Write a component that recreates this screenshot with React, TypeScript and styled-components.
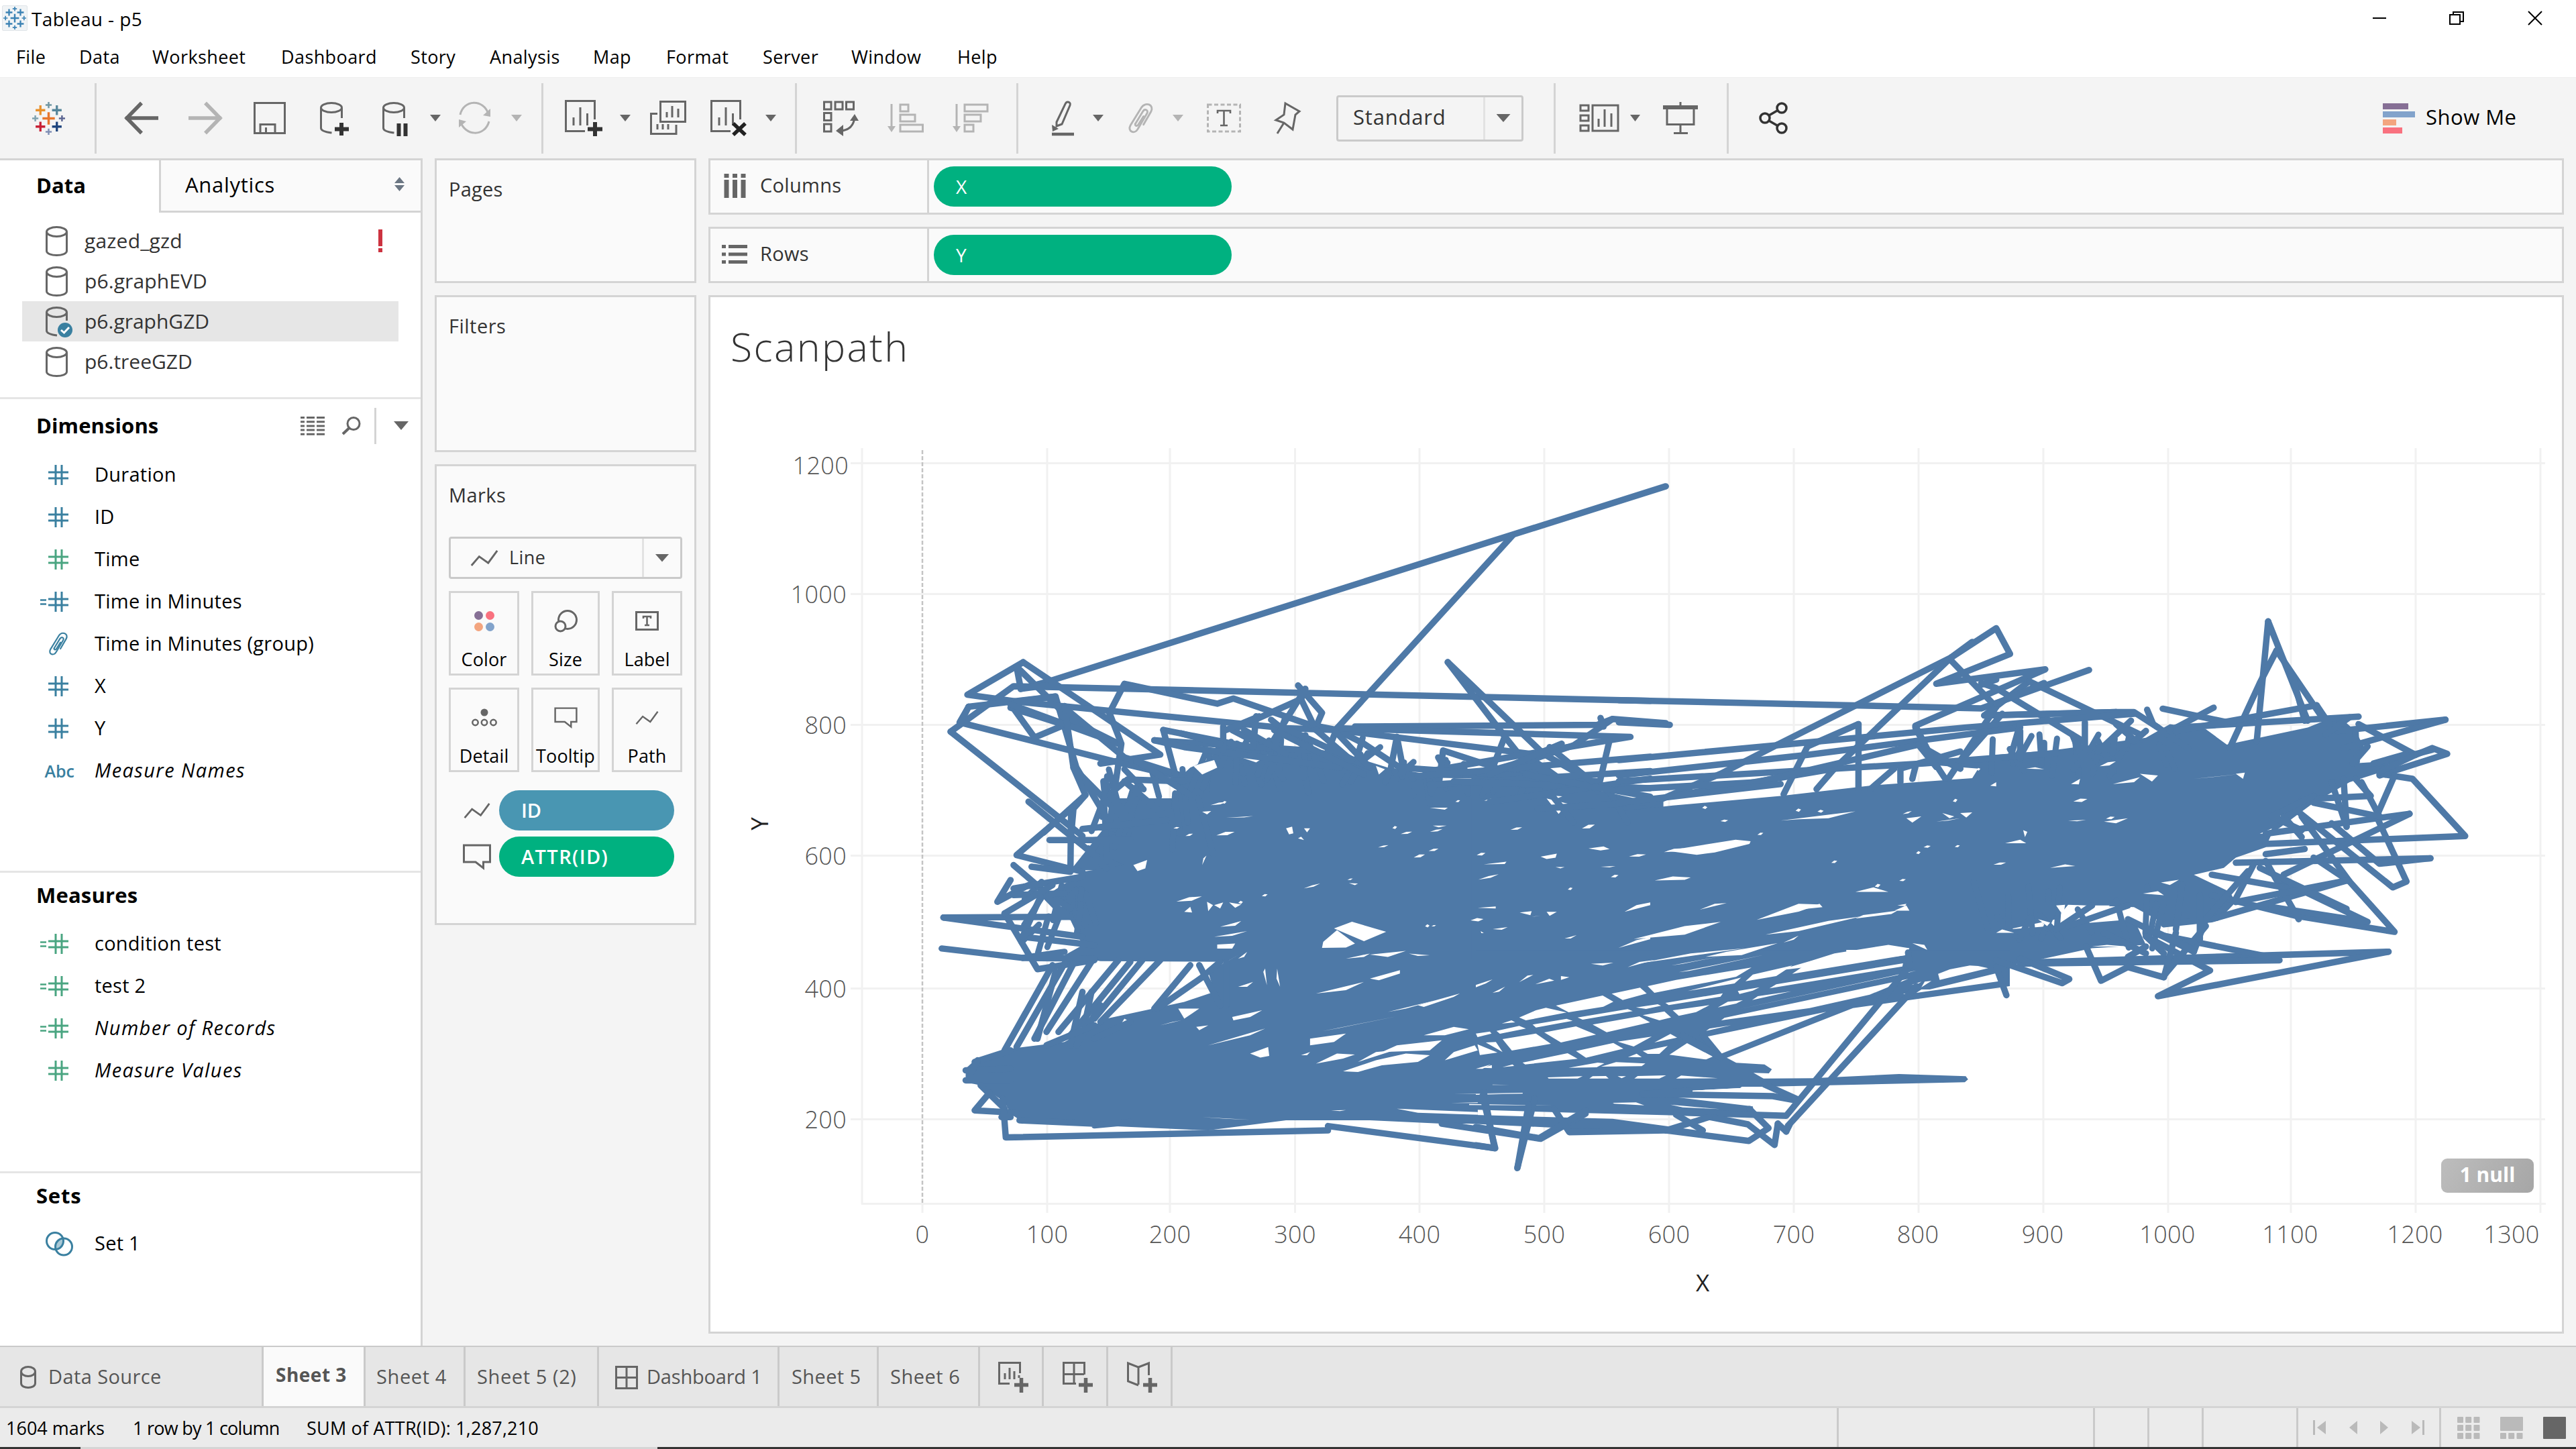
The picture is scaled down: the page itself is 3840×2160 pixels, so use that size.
import React from 'react';
import styled, { createGlobalStyle } from 'styled-components';

const Global = createGlobalStyle`
  * { box-sizing: border-box; }
  html, body { margin: 0; padding: 0; }
  body {
    width: 3840px; height: 2160px; overflow: hidden; background: #f4f4f4; color: #000;
    font-family: "Open Sans", "Noto Sans", "Liberation Sans", sans-serif;
    font-size: 29px; line-height: 1;
  }
  svg { display: block; flex: none; overflow: visible; }
`;

/* ---------- shared ---------- */
const INK = '#666666';
const MUTED = '#b4b4b4';
const BLUE = '#3a80a0';
const GREEN = '#4aa581';
const MARK = '#4e79a7';

const Frame = styled.div`width: 3840px; height: 2160px; display: flex; flex-direction: column;`;
const Text = styled.span<{ $size?: number; $weight?: number; $color?: string; $ls?: number; $italic?: boolean }>`
  display: inline-block;
  padding-bottom: 3px;
  white-space: nowrap;
  font-size: ${p => p.$size ?? 29}px;
  font-weight: ${p => p.$weight ?? 400};
  color: ${p => p.$color ?? '#000'};
  letter-spacing: ${p => p.$ls ?? 0}px;
  font-style: ${p => (p.$italic ? 'italic' : 'normal')};
`;
const Caret = styled.i<{ $color?: string; $w?: number; $h?: number }>`
  display: block; width: ${p => p.$w ?? 16}px; height: ${p => p.$h ?? 10}px;
  background: ${p => p.$color ?? INK};
  clip-path: polygon(0 0, 100% 0, 50% 100%);
`;

/* ---------- title and menu ---------- */
const TitleBar = styled.header`height: 58px; background: #fff; display: flex; align-items: center; padding: 0 50px 4px 3px;`;
const TitleName = styled.div`flex: 1; padding: 4px 0 0 6px;`;
const WindowButtons = styled.div`display: flex; gap: 96px; align-items: center; padding-right: 1px;`;
const MenuBar = styled.nav`height: 57px; background: #fff; display: flex; align-items: center; padding-left: 24px;`;
const MenuItem = styled.div<{ $w: number }>`width: ${p => p.$w}px; padding-bottom: 3px;`;

const menus: [string, number][] = [['File', 94], ['Data', 109], ['Worksheet', 192], ['Dashboard', 193], ['Story', 118], ['Analysis', 154], ['Map', 109], ['Format', 144], ['Server', 132], ['Window', 158], ['Help', 80]];

/* ---------- toolbar ---------- */
const Toolbar = styled.div`height: 121px; background: #f4f4f4; border-top: 1px solid #efefef; display: flex; align-items: center;`;
const Tool = styled.div<{ $gap: number; $w: number }>`
  margin-left: ${p => p.$gap}px; width: ${p => p.$w}px; flex: none; display: flex; align-items: center;
`;
const Rule = styled.div<{ $gap: number }>`margin-left: ${p => p.$gap}px; width: 3px; height: 105px; background: #d4d4d4; flex: none;`;
const Select = styled.div<{ $w: number; $h: number; $arrow: number; $top?: number }>`
  width: ${p => p.$w}px; height: ${p => p.$h}px; margin-top: ${p => p.$top ?? 0}px;
  border: 3px solid #cacaca; border-radius: 4px; display: flex; align-items: stretch;
  & > :first-child { flex: 1; display: flex; align-items: center; }
  & > :last-child { width: ${p => p.$arrow}px; border-left: 3px solid #e2e2e2; display: flex; align-items: center; justify-content: center; }
`;
const SelectValue = styled.div<{ $pad: number; $gap?: number }>`padding-left: ${p => p.$pad}px; gap: ${p => p.$gap ?? 0}px;`;

const Plus = ({ x, y, r, w, c }: { x: number; y: number; r: number; w: number; c: string }) => (
  <path d={`M${x - r} ${y}H${x + r}M${x} ${y - r}V${y + r}`} stroke={c} strokeWidth={w} />
);
const Logo = ({ size, mono }: { size: number; mono?: boolean }) => {
  const c = mono ? Array(9).fill('#3b82b4') : ['#e8762c', '#e8912d', '#56869b', '#c72035', '#1f457e', '#6f96a3', '#7f8fb5', '#7fa2b0', '#5c6692'];
  return (
    <svg width={size} height={size} viewBox="0 0 48 48" fill="none">
      <Plus x={24} y={24} r={9} w={3.4} c={c[0]} />
      <Plus x={12} y={12} r={7} w={3.2} c={c[1]} />
      <Plus x={36} y={12} r={7} w={3.2} c={c[2]} />
      <Plus x={12} y={36} r={7} w={3.2} c={c[3]} />
      <Plus x={36} y={36} r={7} w={3.2} c={c[4]} />
      <Plus x={24} y={4.5} r={4.5} w={2.4} c={c[5]} />
      <Plus x={24} y={43.5} r={4.5} w={2.4} c={c[6]} />
      <Plus x={4.5} y={24} r={4.5} w={2.4} c={c[7]} />
      <Plus x={43.5} y={24} r={4.5} w={2.4} c={c[8]} />
    </svg>
  );
};

const Ic = ({ w, h, c = INK, sw = 3, children }: { w: number; h: number; c?: string; sw?: number; children: React.ReactNode }) => (
  <svg width={w} height={h} viewBox={`0 0 ${w} ${h}`} fill="none" stroke={c} strokeWidth={sw}>{children}</svg>
);
const Arrow = ({ flip, c }: { flip?: boolean; c: string }) => (
  <Ic w={51} h={48} c={c} sw={5.5}><g transform={flip ? 'translate(51 0) scale(-1 1)' : undefined}><path d="M2 24H51M26 1.5L4 24L26 46.5" /></g></Ic>
);
const Cylinder = ({ w, h, children, cut }: { w: number; h: number; children?: React.ReactNode; cut?: boolean }) => (
  <Ic w={w} h={h}>
    <ellipse cx={w / 2} cy={8.5} rx={w / 2 - 1.5} ry={7} />
    <path d={cut ? `M1.5 8.5V${h - 9}q0 5 ${w / 2 - 1} 7M${w - 1.5} 8.5V${h - 24}` : `M1.5 8.5V${h - 8}C1.5 ${h + 0.6} ${w - 1.5} ${h + 0.6} ${w - 1.5} ${h - 8}V8.5`} />
    {children}
  </Ic>
);
const Paperclip = ({ w, h, c }: { w: number; h: number; c: string }) => (
  <svg width={w} height={h} viewBox="0 0 36 46" fill="none" stroke={c} strokeWidth={2.8} strokeLinecap="round">
    <path d="M10 31L21 13C24 8 30 11 27 16L14 38C9 47 -2 42 3 33L19 7C25 -2 38 3 33 13L22 32" />
    <path d="M10 31C9 34 13 35 14.5 32L22 20" />
  </svg>
);
const LineMark = ({ w, h, sw = 3 }: { w: number; h: number; sw?: number }) => (
  <svg width={w} height={h} viewBox="0 0 42 25" fill="none" stroke={INK} strokeWidth={sw}><path d="M1 24L13 10L27 20L41 1" /></svg>
);
const Bubble = ({ w, h }: { w: number; h: number }) => (
  <svg width={w} height={h} viewBox="0 0 42 38" fill="none" stroke={INK} strokeWidth={3}><path d="M1.5 2H40.5V27H30.5V36L19 27H1.5Z" /></svg>
);

const ToolStrip = () => (
  <Toolbar>
    <Tool $gap={48} $w={49}><Logo size={49} /></Tool>
    <Rule $gap={44} />
    <Tool $gap={41} $w={51}><Arrow c={INK} /></Tool>
    <Tool $gap={45} $w={51}><Arrow flip c={MUTED} /></Tool>
    <Tool $gap={46} $w={49}><Ic w={48} h={48}><path d="M1.5 1.5H46.5V46.5H1.5ZM10 46V33.5H32V46M18.5 38V46" /></Ic></Tool>
    <Tool $gap={50} $w={42}>
      <Cylinder w={34} h={48} cut><path d="M32 31V50M22 40.500H43" stroke="#333" strokeWidth={6} /></Cylinder>
    </Tool>
    <Tool $gap={51} $w={37}>
      <Cylinder w={34} h={48} cut><path d="M24.500 32V51M34.500 32V51" stroke="#333" strokeWidth={6} /></Cylinder>
    </Tool>
    <Tool $gap={34} $w={16}><Caret /></Tool>
    <Tool $gap={26} $w={49}>
      <Ic w={49} h={48} c={MUTED}><path d="M3 19C8 -4 38 -5 45 18M46 29C40 52 10 52 3 28" /><path d="M37 20L48 22L48 10ZM12 29L1 26L1 38Z" fill={MUTED} stroke="none" /></Ic>
    </Tool>
    <Tool $gap={30} $w={16}><Caret $color={MUTED} /></Tool>
    <Rule $gap={29} />
    <Tool $gap={32} $w={55}>
      <Ic w={55} h={54}><path d="M30 46.500H1.500V1.500H44.500V29M13 38V26M23 38V11M33.500 38V20" /><path d="M45 33V54M34 43.500H56" stroke="#333" strokeWidth={6} /></Ic>
    </Tool>
    <Tool $gap={27} $w={16}><Caret /></Tool>
    <Tool $gap={29} $w={55}>
      <Ic w={55} h={54}><path d="M15.500 2.500H52.500V32.500H15.500ZM25 26V18M33 26V9M42 26V13M11 20.500H1.500V50.500H39V37M11 44V36M19 44V36M27 44V36" /></Ic>
    </Tool>
    <Tool $gap={35} $w={55}>
      <Ic w={55} h={54}><path d="M30 46.500H1.500V1.500H44.500V29M13 38V26M23 38V11M33.500 38V20" /><path d="M34 35L52 52M52 35L34 52" stroke="#222" strokeWidth={5.500} /></Ic>
    </Tool>
    <Tool $gap={27} $w={16}><Caret /></Tool>
    <Rule $gap={28} />
    <Tool $gap={39} $w={53}>
      <Ic w={53} h={52}><path d="M1.500 2H12V13H1.500ZM18 2H29V13H18ZM34.500 2H45.500V13H34.500ZM1.500 18.500H12V29.500H1.500ZM1.500 35H12V46H1.500Z" /><path d="M47 24C46 38 38 44 26 45" /><path d="M40 30L47 20L53 30ZM30 36L19 45L30 53Z" fill={INK} stroke="none" /></Ic>
    </Tool>
    <Tool $gap={43} $w={54}>
      <Ic w={54} h={44} c={MUTED}><path d="M6 1V36M19 2H31V12H19ZM19 17H41V27H19ZM19 32H52.500V42H19Z" /><path d="M0 34H12L6 43Z" fill={MUTED} stroke="none" /></Ic>
    </Tool>
    <Tool $gap={43} $w={53}>
      <Ic w={54} h={44} c={MUTED}><path d="M6 1V36M18 2H52V12H18ZM18 17H42V27H18ZM18 32H31V42H18Z" /><path d="M0 34H12L6 43Z" fill={MUTED} stroke="none" /></Ic>
    </Tool>
    <Rule $gap={42} />
    <Tool $gap={50} $w={34}>
      <Ic w={34} h={52}><path d="M7 32L20 5C22 0 29 2 27 7L15 35L7 38Z" /><path d="M0 36L10 42L1 46Z" fill={INK} stroke="none" /><path d="M0 50H33" strokeWidth={4.500} /></Ic>
    </Tool>
    <Tool $gap={27} $w={16}><Caret /></Tool>
    <Tool $gap={37} $w={36}><Paperclip w={37} h={47} c={MUTED} /></Tool>
    <Tool $gap={30} $w={16}><Caret $color={MUTED} /></Tool>
    <Tool $gap={35} $w={51}>
      <Ic w={51} h={44}><path d="M1.500 2H49.500V42H1.500Z" stroke={MUTED} strokeDasharray="6 3.500" /><path d="M16 15V11H35V15M25.500 11V33M20 33H31" strokeWidth={2.600} /></Ic>
    </Tool>
    <Tool $gap={50} $w={38}>
      <Ic w={38} h={48}><path d="M16 2L37 14L31 19L27 41L14 31L2 27L14 19ZM14 31L4 47" /></Ic>
    </Tool>
    <Tool $gap={54} $w={279}>
      <Select $w={279} $h={69} $arrow={57}>
        <SelectValue $pad={22}><Text $size={31} $color="#333" $ls={0.8}>Standard</Text></SelectValue>
        <div><Caret $w={21} $h={12} /></div>
      </Select>
    </Tool>
    <Rule $gap={45} />
    <Tool $gap={35} $w={61}>
      <Ic w={61} h={42}><path d="M2 2H14V10H2ZM2 17H14V25H2ZM2 32H14V40H2ZM20 2H58V40H20ZM29 34V22M38 34V8M48 34V14" /></Ic>
    </Tool>
    <Tool $gap={15} $w={15}><Caret $w={15} /></Tool>
    <Tool $gap={34} $w={52}>
      <Ic w={52} h={48}><path d="M26 0V6M6 11V33.500H46V11M26 34V45" /><path d="M0 8H52" strokeWidth={6} /><path d="M16 46.500H37" /></Ic>
    </Tool>
    <Rule $gap={43} />
    <Tool $gap={45} $w={43}>
      <Ic w={43} h={48} c="#333" sw={3.500}><circle cx={9} cy={24} r={7} /><circle cx={34} cy={9} r={7} /><circle cx={34} cy={39} r={7} /><path d="M15 20L28 12.500M15 28L28 35.500" /></Ic>
    </Tool>
    <Tool $gap={887} $w={64}>
      <svg width={48} height={45}><rect width={38} height={9} fill="#866f95" /><rect y={12} width={48} height={9} fill="#82a3cb" /><rect y={24} width={20} height={9} fill="#f3a57f" /><rect y={36} width={29} height={9} fill="#f9717f" /></svg>
    </Tool>
    <Text $size={31} $ls={0.5}>Show Me</Text>
  </Toolbar>
);

/* ---------- sidebar ---------- */
const Main = styled.main`height: 1770px; display: flex; align-items: flex-start;`;
const Sidebar = styled.aside`width: 630px; height: 1770px; background: #fff; border-right: 3px solid #d4d4d4; border-top: 3px solid #d4d4d4; display: flex; flex-direction: column; flex: none;`;
const SideTabs = styled.div`height: 78px; display: flex; flex: none;`;
const ActiveTab = styled.div`width: 237px; padding: 0 0 1px 54px; display: flex; align-items: center;`;
const IdleTab = styled.div`flex: 1; background: #fafafa; border-left: 3px solid #d4d4d4; border-bottom: 3px solid #d4d4d4; padding: 0 24px 0 36px; display: flex; align-items: center; justify-content: space-between;`;
const TabArrows = styled.div`padding-bottom: 4px;`;
const Sources = styled.div`padding: 12px 33px 0 33px; height: 275px; flex: none;`;
const Source = styled.div<{ $on?: boolean }>`
  height: 60px; display: flex; align-items: center; padding: 0 24px 0 35px; background: ${p => (p.$on ? '#e6e6e6' : 'transparent')};
  & > span { margin-left: 25px; flex: 1; padding: 0; }
`;
const Bang = styled.div`width: 6px; height: 34px; background: linear-gradient(#cc3340 0 25px, #fff 25px 28px, #cc3340 28px);`;
const Section = styled.section<{ $h: number }>`height: ${p => p.$h}px; border-top: 3px solid #e5e5e5; flex: none;`;
const SectionHead = styled.div<{ $h: number }>`height: ${p => p.$h}px; display: flex; align-items: center; padding: 0 18px 0 54px; & > :first-child { flex: 1; }`;
const SmallHead = styled(SectionHead)`padding-bottom: 4px;`;
const HeadTools = styled.div`display: flex; align-items: center; gap: 26px; padding-bottom: 2px;`;
const HeadRule = styled.div`width: 3px; height: 54px; background: #d4d4d4; margin-left: -5px;`;
const Field = styled.div`height: 63.1px; display: flex; align-items: center;`;
const FieldIcon = styled.div`width: 141px; display: flex; justify-content: flex-end; padding-right: 39px;`;

const Hash = ({ c, calc }: { c: string; calc?: boolean }) => (
  <Ic w={30} h={30} c={c}><path d="M0 11H30M0 20H30M11 0V30M20 0V30" />{calc && <path d="M-12 12.500H-3M-12 18.500H-3" strokeWidth={2.500} />}</Ic>
);

type F = { k: 'hash' | 'calc' | 'clip' | 'abc' | 'set'; c?: string; t: string; i?: boolean };
const dims: F[] = [
  { k: 'hash', c: BLUE, t: 'Duration' }, { k: 'hash', c: BLUE, t: 'ID' }, { k: 'hash', c: GREEN, t: 'Time' },
  { k: 'calc', c: BLUE, t: 'Time in Minutes' }, { k: 'clip', c: BLUE, t: 'Time in Minutes (group)' },
  { k: 'hash', c: BLUE, t: 'X' }, { k: 'hash', c: BLUE, t: 'Y' }, { k: 'abc', t: 'Measure Names', i: true },
];
const meas: F[] = [
  { k: 'calc', c: GREEN, t: 'condition test' }, { k: 'calc', c: GREEN, t: 'test 2' },
  { k: 'calc', c: GREEN, t: 'Number of Records', i: true }, { k: 'hash', c: GREEN, t: 'Measure Values', i: true },
];
const AbcBox = styled.div`margin-right: -9px;`;
const SetBox = styled.div`margin-right: -6px;`;
const FieldRow = ({ f }: { f: F }) => (
  <Field>
    <FieldIcon>
      {(f.k === 'hash' || f.k === 'calc') && <Hash c={f.c!} calc={f.k === 'calc'} />}
      {f.k === 'clip' && <Paperclip w={30} h={36} c={BLUE} />}
      {f.k === 'abc' && <AbcBox><Text $size={25} $weight={600} $color={BLUE}>Abc</Text></AbcBox>}
      {f.k === 'set' && <SetBox><Ic w={40} h={36} c={BLUE}><path d="M26 11C27 18 22 25 14 26C13 18 18 11 26 11Z" fill="#a9c8d6" stroke="none" /><circle cx={27} cy={22.500} r={12.500} /><circle cx={14} cy={14} r={12.500} /></Ic></SetBox>}
    </FieldIcon>
    <Text $italic={f.i} $size={29} $ls={f.i ? 1.4 : 0.25}>{f.t}</Text>
  </Field>
);

const Side = () => (
  <Sidebar>
    <SideTabs>
      <ActiveTab><Text $size={31} $weight={700}>Data</Text></ActiveTab>
      <IdleTab><Text $size={31} $ls={0.7}>Analytics</Text><TabArrows><svg width={15} height={21}><path d="M0 9L7.500 0L15 9ZM0 12L7.500 21L15 12Z" fill="#6b7683" /></svg></TabArrows></IdleTab>
    </SideTabs>
    <Sources>
      <Source><Cylinder w={33} h={45} /><Text $size={30} $color="#333" $ls={0.2}>gazed_gzd</Text><Bang /></Source>
      <Source><Cylinder w={33} h={45} /><Text $size={30} $color="#333" $ls={0.1}>p6.graphEVD</Text></Source>
      <Source $on>
        <Cylinder w={33} h={45} cut><circle cx={29} cy={35} r={11} fill={BLUE} stroke="none" /><path d="M23 35L27.500 39L35 31" stroke="#fff" /></Cylinder>
        <Text $size={30} $color="#333">p6.graphGZD</Text>
      </Source>
      <Source><Cylinder w={33} h={45} /><Text $size={30} $color="#333">p6.treeGZD</Text></Source>
    </Sources>
    <Section $h={706}>
      <SectionHead $h={81}>
        <Text $size={31} $weight={700} $ls={0.1}>Dimensions</Text>
        <HeadTools>
          <Ic w={36} h={28}><path d="M0 1.500H36M0 7.700H36M0 13.900H36M0 20.100H36M0 26.300H36" strokeDasharray="6 3 12 3 12 0" /></Ic>
          <Ic w={27} h={27}><circle cx={17} cy={10.500} r={9} /><path d="M10.500 17L1 26" strokeWidth={4} /></Ic>
          <HeadRule />
          <Caret $w={22} $h={13} />
        </HeadTools>
      </SectionHead>
      {dims.map(f => <FieldRow key={f.t} f={f} />)}
    </Section>
    <Section $h={448}>
      <SmallHead $h={74}><Text $size={31} $weight={700} $ls={0.2}>Measures</Text></SmallHead>
      {meas.map(f => <FieldRow key={f.t} f={f} />)}
    </Section>
    <Section $h={260}>
      <SmallHead $h={73}><Text $size={31} $weight={700} $ls={0.8}>Sets</Text></SmallHead>
      <FieldRow f={{ k: 'set', t: 'Set 1' }} />
    </Section>
  </Sidebar>
);

/* ---------- cards ---------- */
const Cards = styled.div`width: 390px; margin-left: 18px; display: flex; flex-direction: column; gap: 18px; flex: none;`;
const Card = styled.div<{ $h: number }>`height: ${p => p.$h}px; background: #fafafa; border: 3px solid #d4d4d4; padding: 0 18px;`;
const CardTitle = styled.div`height: 88px; display: flex; align-items: center; padding-bottom: 1px;`;
const ButtonGrid = styled.div`display: grid; grid-template-columns: 105px 102px 105px; column-gap: 18px; row-gap: 18px; margin-top: 18px;`;
const MarkButton = styled.div`
  height: 126px; border: 3px solid #d4d4d4; display: flex; flex-direction: column; align-items: center;
  & > :first-child { height: 85px; padding-bottom: 2px; display: flex; align-items: center; }
`;
const Encodings = styled.div`margin-top: 27px; display: flex; flex-direction: column; gap: 9px;`;
const Encoding = styled.div`display: flex; align-items: center; padding-left: 21px; gap: 12px;`;
const Pill = styled.div<{ $w: number; $bg: string }>`width: ${p => p.$w}px; height: 60px; border-radius: 30px; background: ${p => p.$bg}; padding: 2px 0 0 33px; display: flex; align-items: center;`;

const markButtons: [string, React.ReactNode][] = [
  ['Color', <svg key="c" width={30} height={30}><circle cx={6.5} cy={6.5} r={6.5} fill="#866f95" /><circle cx={23.5} cy={6.5} r={6.5} fill="#f9717f" /><circle cx={6.5} cy={23.5} r={6.5} fill="#f3a57f" /><circle cx={23.5} cy={23.5} r={6.5} fill="#82a3cb" /></svg>],
  ['Size', <Ic key="s" w={35} h={33}><circle cx={20} cy={15} r={13.5} /><circle cx={9.500} cy={24.500} r={7.500} fill="#fafafa" /></Ic>],
  ['Label', <Ic key="l" w={35} h={29}><path d="M1.500 1.500H33.500V27.500H1.500Z" /><path d="M12 11V8H23V11M17.500 8V21M14 21H21" strokeWidth={2.600} /></Ic>],
  ['Detail', <Ic key="d" w={38} h={27}><circle cx={19} cy={6} r={5.500} fill={INK} stroke="none" /><circle cx={5.500} cy={21} r={4.200} strokeWidth={2.500} /><circle cx={19} cy={21} r={4.200} strokeWidth={2.500} /><circle cx={32.500} cy={21} r={4.200} strokeWidth={2.500} /></Ic>],
  ['Tooltip', <Bubble key="t" w={35} h={31} />],
  ['Path', <LineMark key="p" w={35} h={20} />],
];

const CardColumn = () => (
  <Cards>
    <Card $h={186}><CardTitle><Text $color="#333" $ls={0.2}>Pages</Text></CardTitle></Card>
    <Card $h={234}><CardTitle><Text $color="#333" $ls={0.5}>Filters</Text></CardTitle></Card>
    <Card $h={687}>
      <CardTitle><Text $color="#333" $ls={0.4}>Marks</Text></CardTitle>
      <Select $w={348} $h={63} $arrow={57} $top={17}>
        <SelectValue $pad={29} $gap={16}><LineMark w={42} h={24} /><Text $size={27} $color="#333" $ls={0.4}>Line</Text></SelectValue>
        <div><Caret $w={21} $h={12} /></div>
      </Select>
      <ButtonGrid>
        {markButtons.map(([t, icon]) => <MarkButton key={t}><div>{icon}</div><Text $size={27} $ls={0.1}>{t}</Text></MarkButton>)}
      </ButtonGrid>
      <Encodings>
        <Encoding><LineMark w={42} h={23} /><Pill $w={261} $bg="#4996b2"><Text $size={29} $weight={600} $color="#fff">ID</Text></Pill></Encoding>
        <Encoding><Bubble w={42} h={38} /><Pill $w={261} $bg="#00b180"><Text $size={29} $weight={600} $color="#fff" $ls={1.4}>ATTR(ID)</Text></Pill></Encoding>
      </Encodings>
    </Card>
  </Cards>
);

/* ---------- shelves and view ---------- */
const Work = styled.div`width: 2766px; margin-left: 18px; display: flex; flex-direction: column; gap: 18px;`;
const Shelf = styled.div`height: 84px; background: #fafafa; border: 3px solid #d4d4d4; display: flex; align-items: center;`;
const ShelfName = styled.div`
  width: 326px; height: 78px; border-right: 3px solid #d4d4d4; margin-right: 7px;
  display: flex; align-items: center; gap: 21px; padding: 0 0 2px 19px;
`;
const View = styled.div`height: 1548px; background: #fff; border: 3px solid #d4d4d4; position: relative;`;
const ViewTitle = styled.h1`margin: 0; position: absolute; left: 30px; top: 44px; font-size: 59px; font-weight: 300; letter-spacing: 2.4px; color: #333;`;
const NullBadge = styled.div`
  position: absolute; left: 2580px; top: 1284px; width: 138px; height: 51px; border-radius: 9px;
  background: linear-gradient(120deg, #bdbdbd, #a6a6a6); display: flex; align-items: center; justify-content: center;
`;
const Chart = styled.svg`position: absolute; left: -3px; top: -3px;`;

const X0 = 1056, Y0 = 440;

type Sheet = { ox: number; oy: number; kx: number; ky: number; solids?: string[]; lines: string[]; gaps?: string[] };

const sheets: Sheet[] = [
  {
    ox: 1060, oy: 430, kx: 1.12, ky: 1.96,
    solids: [
      '660,1568 740,1515 780,1500 775,1440 800,1400 850,1360 900,1345 1010,1345 1060,1362 1130,1400 1200,1420 1280,1410 1370,1365 1400,1400 1440,1450 1568,1500 1568,1700 600,1700',
    ],
    lines: [
      '560,1150 1594,578', '517,1170 560,1150', '1338,722 1045,1285 1030,1350', '521,1092 428,1187 510,1207 575,1192', '521,1092 750,1362 650,1388',
      '510,1105 517,1170 560,1160', '510,1105 600,1260 680,1330', '400,1295 505,1162 1568,1205', '430,1222 415,1268 680,1385 790,1430', '430,1222 575,1192 610,1400 665,1560',
      '430,1222 415,1275', '510,1207 960,1285 1045,1290 1370,1360', '500,1215 540,1312 590,1275 500,1225', '500,1215 680,1330', '400,1295 620,1600', '665,1240 690,1155 845,1213 872,1198 1000,1275 1045,1290 1090,1330 1150,1400',
      '665,1240 685,1330 665,1568', '590,1220 605,1400 700,1568', '590,1225 690,1370 780,1420', '655,1440 658,1488 695,1435 790,1440', '555,1590 625,1480 605,1400', '601,1600 605,1520 625,1480',
      '1230,1092 1330,1320 1440,1560', '1230,1092 1390,1360 1500,1470 1530,1560', '1075,1280 1480,1275 1505,1258 1594,1270', '1045,1285 1535,1310 1430,1340 1200,1410',
      '1505,1258 1440,1335 1300,1420', '1485,1255 1490,1280', '1500,1320 1480,1470', '980,1160 1020,1240 1010,1280', '992,1170 985,1200 870,1290 930,1345', '992,1170 930,1345', '740,1320 1000,1350', '755,1290 900,1340', '755,1290 775,1420', '740,1320 790,1340 1050,1400',
      '1145,1310 1135,1400', '1145,1310 1155,1400', '1215,1450 1222,1350 1310,1400', '1325,1310 1305,1400', '910,1250 905,1340', '935,1260 985,1330', '855,1280 855,1350', '960,1285 1100,1400', '690,1440 770,1560', '710,1380 800,1480', '665,1480 700,1560', '1150,1400 1480,1440',
      '1180,1425 1568,1368', '1200,1450 1568,1410', '1240,1440 1568,1460', '1300,1500 1568,1432', '1360,1420 1568,1485', '1380,1520 1568,1500', '785,1300 850,1330', '1040,1290 1100,1400', '890,1290 960,1360', '915,1250 860,1290',
      '940,1290 1090,1420', '960,1250 940,1340', '985,1200 1010,1290', '1010,1290 1070,1380', '1400,1340 1470,1440', '1300,1420 1420,1330',
    ],
    gaps: ['805,1395 840,1378 845,1400 820,1420', '1320,1435 1345,1425 1340,1445', '1110,1395 1125,1405 1115,1420', '1215,1430 1270,1432 1250,1448 1215,1450', '1395,1490 1430,1505 1415,1535', '885,1370 930,1362 910,1385'],
  },
  {
    ox: 1060, oy: 1200, kx: 1.12, ky: 2.01,
    solids: [
      '680,-20 665,50 620,72 700,85 590,105 650,115 640,140 690,180 620,200 600,225 560,270 590,310 590,340 600,345 620,420 590,450 650,468 860,470 890,440 830,500 840,560 790,590 660,640 590,710 500,730 440,765 425,790 425,830 450,840 490,890 500,925 520,950 560,942 640,960 830,975 960,945 1100,945 1220,955 1280,955 1280,-20',
      '1270,-20 1590,-20 1590,460 1270,460',
    ],
    lines: [
      '530,-10 640,150', '615,-10 510,150 620,200', '601,30 600,190', '620,72 760,45', '565,105 700,105', '630,130 660,190', '505,180 560,265 600,310', '500,225 478,290 530,240', '505,250 620,215', '535,185 600,200', '505,270 590,265', '560,270 590,330',
      '388,337 600,335', '388,337 520,370 620,395', '385,430 520,458 590,440', '490,325 545,492 640,465', '490,325 570,240', '550,275 520,395 640,420', '520,395 530,380', '520,458 640,460',
      '570,480 490,735', '590,475 510,725', '605,475 540,700', '635,470 560,680', '680,465 580,680', '700,470 600,690', '720,465 640,640', '750,465 650,650', '800,480 740,610', '825,510 745,610', '575,500 545,700', '620,560 600,720', '635,560 620,690', '650,600 610,720', '815,480 850,600', '850,470 830,500', '700,650 640,700',
      '440,770 500,735', '425,795 500,790', '425,825 500,825', '450,840 490,910', '445,765 435,800', '465,862 440,915 510,922', '487,880 492,996 1030,975', '485,935 500,935', '1030,962 1308,1028 1290,860', '1220,955 1385,1000 1460,925', '1346,1088 1375,880', '515,945 640,955 640,960 700,950', '640,660 560,720', '860,470 860,600',
    ],
    gaps: [
      '1040,370 1070,350 1127,380 1090,408', '1045,375 1075,415 1060,427 1020,428 1022,410', '900,745 930,725 932,752 917,757', '1010,775 1045,745 1075,748 1055,760', '1055,798 1110,765 1160,745 1200,750 1180,770 1120,780 1080,800', '1190,690 1240,665 1265,672 1225,690', '1120,740 1145,720 1220,705 1200,735', '1000,720 1000,700 1060,685 1040,710', '1240,740 1275,720 1280,735 1225,765',
      '870,635 920,615 900,635 872,645', '810,665 830,660 815,675', '700,650 680,670 690,640', '750,660 785,645 770,650', '640,700 655,680 675,665', '780,610 815,610 790,640', '985,750 1000,740 995,750', '830,720 925,670 900,690', '1020,678 1145,633 1050,668', '1110,740 1080,770 1140,735', '850,365 885,348 875,362', '840,395 895,378 870,392', '845,418 875,415 870,430 845,430', '960,70 970,65 972,85 965,88', '980,100 985,95 990,105', '990,70 1000,70 995,82', '705,180 728,165 725,190 712,198', '820,180 827,152 822,160', '790,320 800,305 803,322', '828,290 838,300 830,318', '840,300 855,292 850,310', '865,292 885,298 875,308', '860,38 905,33 890,37', '820,20 835,18 828,28', '1205,62 1228,62 1215,67', '1200,8 1230,8 1225,14', '1065,234 1080,235 1075,240', '880,545 905,530 895,545', '925,490 928,540 922,500', '945,490 950,545 944,520', '1010,565 1090,530 1060,555', '1100,520 1150,495 1150,505 1115,525', '1180,600 1250,565 1240,575 1190,605', '1130,620 1210,585 1160,610', '1060,460 1100,445 1090,455', '1100,448 1160,437 1130,455', '1165,445 1200,450 1180,452', '880,460 895,440 890,455', '1240,866 1355,862 1355,865', '1235,893 1280,891 1280,893', '1145,910 1280,920 1280,928 1180,922', '1035,915 1060,914 1050,917', '985,946 1005,946 995,949', '820,935 900,943 860,940',
      '1290,178 1328,170 1325,177', '1385,155 1412,146 1410,158 1395,162', '1465,130 1490,124 1500,132 1485,136', '1410,186 1425,186 1418,190', '1485,185 1510,183 1500,187', '1280,308 1310,304 1310,310', '1350,322 1370,318 1368,330', '1395,320 1412,320 1400,332', '1525,320 1545,300 1568,292 1568,300', '1285,378 1290,384 1286,384', '1515,428 1545,405 1568,395 1568,402', '1370,335 1385,331 1375,334', '1425,400 1445,390 1435,400', '1305,372 1330,366 1320,374',
    ],
  },
  {
    ox: 2440, oy: 860, kx: 1.12, ky: 1.96,
    solids: [
      '-30,685 60,668 240,640 400,608 560,588 570,560 480,548 600,520 700,505 850,470 890,430 950,445 985,490 1120,440 1170,405 1200,450 1215,500 1195,545 1240,540 1270,555 1190,600 1130,660 1060,750 1050,790 1000,820 980,850 930,870 990,920 1000,950 970,1005 880,1012 830,965 720,958 700,1000 620,1030 830,1000 850,1075 760,1085 640,1130 540,1145 500,1160 450,1110 300,1112 -30,1112',
    ],
    lines: [
      '-30,360 575,384 755,272', '-30,425 55,432', '235,490 525,235 600,150 623,225 500,312 682,270 465,435 490,520 540,560', '525,235 330,560 300,620', '525,245 600,380', '560,190 525,235', '575,310 600,325 745,480', '575,315 600,300', '600,380 520,590', '545,530 610,400',
      '655,305 580,405 800,395', '655,305 840,460', '600,370 680,310', '1054,130 1035,480', '1054,130 1120,420', '1068,215 1040,310 990,500', '1068,215 1140,400', '1095,290 1115,420', '852,388 862,430 920,500', '878,385 1000,430', '963,382 890,450', '800,395 830,395 870,440', '580,405 800,395',
      '370,430 370,620', '370,430 285,495 245,635', '235,490 140,575 20,665', '330,560 60,640', '-30,535 550,440 830,400', '-30,580 285,520 640,440', '-30,597 480,545 700,515', '-30,622 200,600 470,490', '-30,660 240,605', '470,490 540,560', '500,555 470,490',
      '1205,408 900,440', '1350,417 1170,450', '1350,417 1180,500', '1135,375 1160,440', '1135,375 900,450', '1205,430 1300,520 1328,500 1353,517 1240,580', '1240,545 1328,505', '1240,575 1295,590 1383,757 1050,780', '1265,580 1235,700 1285,890 1262,907 1100,680', '1290,692 1050,750', '1290,692 1080,870', '1325,822 1000,835', '1325,822 1240,838 1160,720',
      '1110,700 1190,890 1265,1037 1100,990 960,930', '1130,820 1190,890', '1185,887 960,1000 880,1015', '1080,890 1220,1008 1060,965', '1040,850 1185,970', '1105,1000 1050,830', '960,870 1090,910', '1185,887 1000,950', '1255,1095 640,1127', '1255,1095 870,1225 957,1150 850,1050', '1073,1120 640,1130', '1070,1115 870,1045',
      '600,1120 710,1187 722,1175 640,1115', '600,1140 617,1222', '750,1080 775,1180 820,1140 880,1170 900,1040', '930,1095 820,1000', '930,1095 950,1000 1020,860', '880,1165 950,1020', '1225,640 1110,650', '1225,640 1200,590', '1185,730 1160,600', '1210,600 1240,700', '1130,660 1240,700', '1180,590 1185,730', '1115,795 1050,810', '1110,740 1060,700 1130,640', '1080,700 1110,760', '680,485 680,520', '640,430 625,520', '640,450 640,530', '748,425 748,500', '825,420 770,510', '800,430 840,490', '850,450 830,480', '1190,410 1150,460', '1200,450 1202,540', '1220,495 1195,545', '1280,520 1230,545', '1300,520 1240,570', '430,560 390,620', '440,565 440,600', '465,555 460,590', '500,550 515,590', '780,1040 850,1100', '850,1050 880,1100', '870,1040 930,1090', '820,1110 850,1080', '540,510 440,560', '465,440 500,555', '760,960 700,1030', '820,960 720,1020', '940,930 940,1060', '910,900 900,1030', '1030,840 1000,940',
    ],
    gaps: [
      '50,800 165,768 190,772 188,780 130,805 100,812', '30,887 60,875 90,878 80,885', '240,712 365,685 320,705 270,708', '105,972 130,955 150,953', '200,1002 270,955 305,957 270,978', '365,920 395,907 420,920', '-5,1058 80,1045 140,1008 80,1020', '215,1045 320,1005 375,992 270,1035', '365,998 378,988 435,975 425,985', '245,1068 270,1048 262,1060', '115,1110 150,1095 235,1070 175,1105', '0,1130 100,1105 180,1085 90,1100', '235,1150 290,1122 330,1100 420,1075 455,1085 450,1105 390,1118', '690,850 715,840 732,845', '510,690 522,705 530,700', '540,690 560,688 550,703', '450,705 475,700 460,718', '500,715 540,705 520,712', '645,740 652,745 648,760', '615,778 640,768 650,778', '875,893 905,885 890,900', '845,925 870,918 880,930', '760,960 790,960 775,975', '430,975 450,960 455,975', '435,960 450,955 448,962', '760,1080 785,1075 820,1080', '280,970 305,955 310,965', '780,715 820,705 800,720', '720,712 750,710 735,714', '840,575 870,580 860,598', '930,590 1010,575 960,585', '725,605 740,590 738,606', '590,610 600,600 600,612', '495,548 520,546 510,549', '795,605 840,585 830,600', '460,1070 480,1075 485,1090', '1040,750 1060,735 1058,750', '1070,690 1085,685 1075,700', '700,960 715,958 712,990', '670,1000 690,1010 685,1020', '610,1030 630,1040 600,1040', '650,560 665,556 680,562', '1000,575 1015,572 1012,590', '780,980 810,965 785,995',
    ],
  },
  {
    ox: 2200, oy: 1420, kx: 2.01, ky: 3,
    solids: [
      '0,-10 1600,-10 1600,150 1568,157 1300,212 1130,248 752,470 780,493 865,500 887,522 878,540 832,538 862,563 1010,562 1268,543 1468,553 1475,567 1465,580 930,598 870,600 797,600 792,606 640,618 560,640 830,688 835,735 600,728 330,718 0,703',
      '-20,725 410,743 580,778 690,800 560,805 285,815 260,785 -20,765',
    ],
    lines: [
      '640,618 500,632 890,642 962,662', '865,590 962,655', '820,700 877,785 818,842 570,795', '600,715 930,730 1300,60', '930,800 935,775 1320,150', '905,765 895,860 815,768 700,735', '905,765 930,800 940,770', '600,725 680,795', '700,735 570,795', '0,780 190,830 330,705', '235,700 280,803 570,795', '0,862 58,875 20,640', '158,680 125,960', '680,370 735,470', '620,370 735,470', '1295,0 1300,60',
    ],
    gaps: [
      '240,237 380,192 412,220 382,242 278,267', '407,184 492,157 512,183 440,212', '515,150 600,122 826,67 780,108 535,180', '635,172 795,112 775,138', '808,128 830,98 948,58 900,105', '948,95 1003,38 1110,0 1110,-12 1285,-12 1285,12', '880,160 900,142 1280,48 1278,62', '785,172 850,155 830,170 790,185', '828,212 845,195 945,173', '790,253 1320,80 1290,92', '735,303 745,292 1295,118 1180,188 1000,248', '130,290 180,258 210,247 272,268 150,303', '78,317 107,303 118,312', '170,322 272,296 290,305 180,335', '305,290 455,253 470,262 320,300', '480,245 545,231 555,238 510,252', '568,225 740,182 733,197 578,235', '0,362 42,353 47,362 5,378', '62,350 130,328 150,340 72,363', '350,322 490,285 522,312 392,356', '500,280 565,263 585,290 550,303', '590,258 700,235 660,266 608,283', '725,245 755,220 800,213 780,228', '80,387 180,362 225,408 108,438', '205,357 300,330 360,367 255,402', '30,402 60,400 80,445', '5,410 65,447 12,458', '300,440 412,404 442,430 330,470', '425,398 527,376 473,420', '535,402 583,364 603,380', '500,440 575,418 550,453 515,453', '456,467 482,452 497,468', '580,457 633,405 710,465 690,478', '140,492 275,450 305,475 148,500', '278,515 365,492 385,495 362,513', '375,510 420,490 508,496 497,508', '215,558 320,553 305,563 218,563', '350,553 390,552 398,563 340,563', '425,553 450,553 437,562', '485,552 570,549 550,563 475,563', '600,563 615,550 725,562', '680,380 1050,265 730,455', '690,350 700,340 765,325', '1385,95 1420,75 1480,58 1505,60 1535,70 1390,122', '1335,165 1360,165 1560,92 1568,128 1320,180', '1345,130 1365,127 1335,155', '585,58 750,12 620,50', '608,88 865,10 640,82', '345,50 412,45 380,58', '455,65 490,42 535,33', '0,155 0,145 50,120 30,138', '130,132 155,103 172,100', '178,142 220,117 235,125', '255,105 280,110 255,122', '50,180 88,152 70,175', '0,520 45,500 20,520', '20,515 48,503 48,517', '80,512 110,500 115,507', '410,672 480,670 505,683 415,676', '583,680 730,700 620,692', '-20,677 230,684 -20,682', '0,632 140,631 0,636', '50,590 100,592 50,592', '640,618 870,600 905,628', '1280,185 1305,178 1300,188', '1305,145 1335,130 1325,140',
    ],
  },
];

const project = (s: Sheet, pts: string) =>
  pts.split(' ').map(p => {
    const [x, y] = p.split(',').map(Number);
    return `${(s.ox + x / s.kx - X0).toFixed(1)},${(s.oy + y / s.ky - Y0).toFixed(1)}`;
  }).join(' ');

const random = (seed: number) => () => {
  seed = (seed * 1664525 + 1013904223) % 4294967296;
  return seed / 4294967296;
};

/* fine gaps left between neighbouring saccades */
const slivers = (() => {
  const r = random(11);
  return Array.from({ length: 52 }, () => {
    const x = 1720 + r() * 1480;
    const y = 1310 - (x - 1720) * 0.08 + (r() - 0.5) * 210;
    const len = 6 + r() * r() * 34;
    const t = 0.9 + r() * 1.8;
    const dy = -len * (0.1 + r() * 0.25);
    const px = x - X0, py = y - Y0;
    return `${px},${py} ${px + len * 0.5},${py + dy * 0.5 - t} ${px + len},${py + dy} ${px + len * 0.6},${py + dy * 0.5 + t}`;
  });
})();

/* short saccades around the rim of a dense cluster */
const rim = (seed: number, n: number, x: [number, number], y: [number, number], dx: number, dy: number) => {
  const r = random(seed);
  return Array.from({ length: n }, () => {
    const a = x[0] + r() * (x[1] - x[0]) - X0;
    const b = y[0] + r() * (y[1] - y[0]) - Y0;
    return `${a},${b} ${a + (r() - 0.5) * dx},${b + dy * (0.5 + r())}`;
  });
};
const rims = [
  ...rim(3, 26, [1790, 2060], [1095, 1125], 70, 45),
  ...rim(7, 16, [2060, 2330], [1125, 1150], 60, 35),
  ...rim(9, 14, [1640, 1790], [1140, 1210], 60, 60),
  ...rim(21, 18, [2960, 3240], [1092, 1120], 70, 40),
  ...rim(33, 14, [2960, 3240], [1380, 1420], 70, -50),
  ...rim(5, 14, [1545, 1620], [1300, 1390], 60, 40),
];

const xTicks: [string, number, number][] = [['0', 1375, 1375], ['100', 1561, 1561], ['200', 1744, 1744], ['300', 1930.5, 1930.5], ['400', 2116, 2116], ['500', 2302, 2302], ['600', 2488, 2488], ['700', 2674, 2674], ['800', 2860, 2859], ['900', 3046, 3045], ['1000', 3232, 3231], ['1100', 3415, 3414], ['1200', 3601, 3600], ['1300', 3787, 3744]];
const yTicks: [string, number, number, number][] = [['1200', 690.5, 707, 1265], ['1000', 885.5, 899, 1262], ['800', 1080.5, 1094, 1262], ['600', 1275.5, 1289, 1262], ['400', 1473.5, 1487, 1262], ['200', 1668.5, 1682, 1262]];

const AxisText = styled.text<{ $title?: boolean }>`
  font-family: "Open Sans", "Noto Sans", sans-serif;
  font-size: ${p => (p.$title ? 35 : 36)}px;
  font-weight: ${p => (p.$title ? 400 : 300)};
  letter-spacing: ${p => (p.$title ? 0 : 0.3)}px;
  fill: ${p => (p.$title ? '#222' : '#555')};
`;

const Scanpath = () => (
  <Chart width={2766} height={1548}>
    <g stroke="#f1f1f1" strokeWidth={3} fill="none">
      <path d={`M${1285 - X0} ${668 - Y0}V${1795 - Y0}`} />
      {xTicks.map(([t, x]) => <path key={t} d={t === '0' ? `M${x - X0} ${1794 - Y0}v14` : `M${x - X0} ${668 - Y0}V${1808 - Y0}`} />)}
      {yTicks.map(([t, y]) => <path key={t} d={`M${1268 - X0} ${y - Y0}H${3794 - X0}`} />)}
      <path d={`M${1284 - X0} ${1794.5 - Y0}H${3795 - X0}`} />
    </g>
    <path d={`M${1375 - X0} ${671 - Y0}V${1793 - Y0}`} stroke="#c4c4c4" strokeWidth={2.5} strokeDasharray="6 3" />
    <g fill={MARK}>{sheets.flatMap((s, i) => (s.solids ?? []).map((p, j) => <polygon key={`${i}-${j}`} points={project(s, p)} />))}</g>
    <g fill="none" stroke={MARK} strokeWidth={9} strokeLinejoin="round" strokeLinecap="round">
      {rims.map((p, i) => <polyline key={i} points={p} />)}
    </g>
    <g fill="#fff">
      {sheets.flatMap((s, i) => (s.gaps ?? []).map((p, j) => <polygon key={`${i}-${j}`} points={project(s, p)} />))}
      {slivers.map((p, i) => <polygon key={i} points={p} />)}
    </g>
    <g fill="none" stroke={MARK} strokeWidth={9.5} strokeLinejoin="round" strokeLinecap="round">
      {sheets.flatMap((s, i) => s.lines.map((p, j) => <polyline key={`${i}-${j}`} points={project(s, p)} />))}
    </g>
    {xTicks.map(([t, , x]) => <AxisText key={t} x={x - X0} y={1853 - Y0} textAnchor="middle">{t}</AxisText>)}
    {yTicks.map(([t, , b, r]) => <AxisText key={t} x={r - X0} y={b - Y0} textAnchor="end">{t}</AxisText>)}
    <AxisText $title x={2538 - X0} y={1925 - Y0} textAnchor="middle">X</AxisText>
    <AxisText $title transform={`translate(${1145 - X0} ${1228 - Y0}) rotate(-90)`} textAnchor="middle">Y</AxisText>
  </Chart>
);

const Workspace = () => (
  <Work>
    <Shelf>
      <ShelfName><Ic w={34} h={36} sw={7}><path d="M5 0V6M17.500 0V6M30 0V6M5 9V36M17.500 9V36M30 9V36" /></Ic><Text $color="#333" $ls={0.3}>Columns</Text></ShelfName>
      <Pill $w={444} $bg="#00b180"><Text $size={28} $color="#fff">X</Text></Pill>
    </Shelf>
    <Shelf>
      <ShelfName><Ic w={34} h={30} sw={5}><path d="M-2 3.500H4M8 3.500H36M-2 15H4M8 15H36M-2 26.500H4M8 26.500H36" /></Ic><Text $color="#333" $ls={0.3}>Rows</Text></ShelfName>
      <Pill $w={444} $bg="#00b180"><Text $size={28} $color="#fff">Y</Text></Pill>
    </Shelf>
    <View>
      <ViewTitle>Scanpath</ViewTitle>
      <Scanpath />
      <NullBadge><Text $size={30} $weight={700} $color="#fff">1 null</Text></NullBadge>
    </View>
  </Work>
);

/* ---------- bottom ---------- */
const TabBar = styled.div`height: 93px; background: #e6e6e6; border-top: 2px solid #cacaca; border-bottom: 3px solid #d4d4d4; display: flex;`;
const SheetTab = styled.div<{ $w: number; $pad: number; $gap?: number; $on?: boolean }>`
  width: ${p => p.$w}px; padding-left: ${p => p.$pad}px; gap: ${p => p.$gap ?? 0}px; display: flex; align-items: center;
  padding-bottom: ${p => (p.$on ? 4 : 0)}px; padding-top: ${p => (p.$on ? 0 : 2)}px;
  border-right: 3px solid #cacaca; background: ${p => (p.$on ? '#fafafa' : 'transparent')};
`;
const IconTab = styled(SheetTab)`padding-top: 0; padding-bottom: 1px;`;
const StatusBar = styled.footer`height: 58px; background: #ebebeb; display: flex; align-items: center; padding-left: 9px;`;
const StatusText = styled.div<{ $w: number }>`width: ${p => p.$w}px; flex: none; padding-top: 2px;`;
const StatusCell = styled.div<{ $w: number }>`width: ${p => p.$w}px; height: 58px; border-left: 3px solid #cacaca; display: flex; align-items: center; flex: none;`;
const NavCell = styled.div`display: flex; gap: 34px; padding-left: 22px;`;
const ModeCell = styled.div`display: flex; gap: 30px; padding-left: 24px; padding-top: 2px;`;
const Strip = styled.div`height: 3px; background: linear-gradient(90deg, #333 0 120px, #d5d5d5 120px 980px, #333 980px);`;

const Bottom = () => (
  <>
    <TabBar>
      <SheetTab $w={393} $pad={30} $gap={18}><Cylinder w={24} h={34} /><Text $color="#555" $ls={0.4}>Data Source</Text></SheetTab>
      <SheetTab $w={152} $pad={18} $on><Text $weight={700} $color="#555" $size={28} $ls={0.5}>Sheet 3</Text></SheetTab>
      <SheetTab $w={149} $pad={16}><Text $color="#555" $ls={0.6}>Sheet 4</Text></SheetTab>
      <SheetTab $w={199} $pad={17}><Text $color="#555" $ls={0.6}>Sheet 5 (2)</Text></SheetTab>
      <SheetTab $w={269} $pad={24} $gap={13}><Ic w={34} h={35}><path d="M1.500 1.500H32.500V33.500H1.500ZM17 1V34M1 17.500H33" /></Ic><Text $color="#555" $ls={-0.2}>Dashboard 1</Text></SheetTab>
      <SheetTab $w={148} $pad={18}><Text $color="#555" $ls={0.4}>Sheet 5</Text></SheetTab>
      <SheetTab $w={151} $pad={17}><Text $color="#555" $ls={0.5}>Sheet 6</Text></SheetTab>
      <IconTab $w={95} $pad={27}><Ic w={45} h={44}><path d="M17 32.500H1.500V1.500H32.500V17M10 26V17M17 26V9M24 26V14M31 20V24" /><path d="M34.500 24V46M24 34.500H45" strokeWidth={5.500} /></Ic></IconTab>
      <IconTab $w={96} $pad={28}><Ic w={45} h={44}><path d="M20 32.500H1.500V1.500H32.500V19M17 1V32M1 18.500H32" /><path d="M34.500 24V46M24 34.500H45" strokeWidth={5.500} /></Ic></IconTab>
      <IconTab $w={96} $pad={28}><Ic w={45} h={44}><path d="M17 34V8L1.500 2V29L17 35M17 8L32.500 2V20" /><path d="M34.500 24V46M24 34.500H45" strokeWidth={5.500} /></Ic></IconTab>
    </TabBar>
    <StatusBar>
      <StatusText $w={189}><Text $size={27}>1604 marks</Text></StatusText>
      <StatusText $w={259}><Text $size={27} $ls={-0.75}>1 row by 1 column</Text></StatusText>
      <StatusText $w={2281}><Text $size={27} $ls={0.2}>SUM of ATTR(ID): 1,287,210</Text></StatusText>
      <StatusCell $w={382} /><StatusCell $w={81} /><StatusCell $w={81} /><StatusCell $w={141} />
      <StatusCell $w={213}>
        <NavCell>
          <svg width={20} height={22} fill="#bababa"><path d="M0 0H3V22H0ZM19 1V21L6 11Z" /></svg>
          <svg width={12} height={22} fill="#bababa"><path d="M12 1V21L0 11Z" /></svg>
          <svg width={12} height={22} fill="#bababa"><path d="M0 1V21L12 11Z" /></svg>
          <svg width={20} height={22} fill="#bababa"><path d="M17 0H20V22H17ZM1 1V21L14 11Z" /></svg>
        </NavCell>
      </StatusCell>
      <StatusCell $w={200}>
        <ModeCell>
          <svg width={34} height={34} fill="#bababa">{[0, 12.2, 24.5].flatMap(x => [0, 12, 24].map(y => <rect key={`${x}${y}`} x={x} y={y} width={9} height={9} rx={1} />))}</svg>
          <svg width={34} height={34} fill="#bababa"><rect width={34} height={21} rx={1} />{[0, 12.2, 24.5].map(x => <rect key={x} x={x} y={24} width={9} height={9} rx={1} />)}</svg>
          <svg width={34} height={34} fill={INK}><rect width={34} height={33} rx={1} /></svg>
        </ModeCell>
      </StatusCell>
    </StatusBar>
    <Strip />
  </>
);

const IconTile = styled.div`width: 38px; height: 38px; background: #f1f4f6; border: 1px solid #dfe4e8; border-radius: 2px; display: flex; align-items: center; justify-content: center;`;

export default function App() {
  return (
    <Frame>
      <Global />
      <TitleBar>
        <IconTile><Logo size={34} mono /></IconTile>
        <TitleName><Text $size={28} $ls={0.4}>Tableau - p5</Text></TitleName>
        <WindowButtons>
          <Ic w={20} h={20} c="#000" sw={2}><path d="M0 10H20" /></Ic>
          <Ic w={20} h={20} c="#000" sw={2}><path d="M-1 5H14V19H-1ZM4 5V1H19V15H14" /></Ic>
          <Ic w={20} h={20} c="#000" sw={2}><path d="M0 0L20 20M20 0L0 20" /></Ic>
        </WindowButtons>
      </TitleBar>
      <MenuBar>{menus.map(([t, w]) => <MenuItem key={t} $w={w}><Text $size={27} $ls={0.4}>{t}</Text></MenuItem>)}</MenuBar>
      <ToolStrip />
      <Main>
        <Side />
        <CardColumn />
        <Workspace />
      </Main>
      <Bottom />
    </Frame>
  );
}
